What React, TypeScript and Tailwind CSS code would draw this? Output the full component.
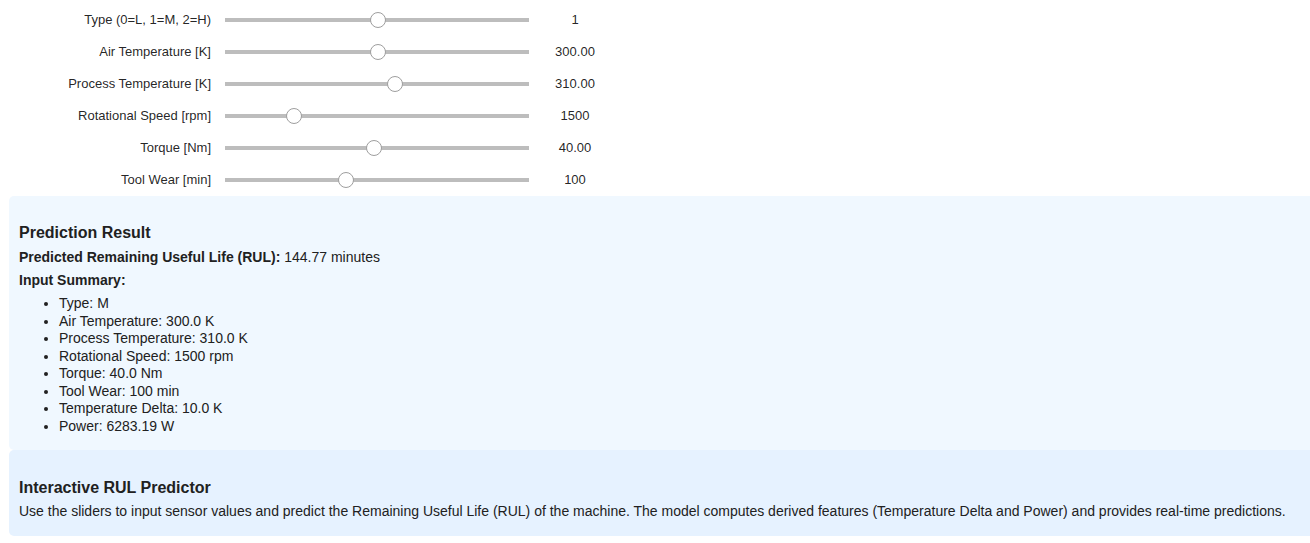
import { useState } from 'react';

type Slider = {
  id: string;
  label: string;
  min: number;
  max: number;
  step: number;
  initial: number;
  digits: number;
};

const sliders: Slider[] = [
  { id: 'type', label: 'Type (0=L, 1=M, 2=H)', min: 0, max: 2, step: 1, initial: 1, digits: 0 },
  { id: 'air', label: 'Air Temperature [K]', min: 295, max: 305, step: 0.1, initial: 300, digits: 2 },
  { id: 'process', label: 'Process Temperature [K]', min: 305, max: 314, step: 0.1, initial: 310, digits: 2 },
  { id: 'speed', label: 'Rotational Speed [rpm]', min: 1168, max: 2650, step: 1, initial: 1500, digits: 0 },
  { id: 'torque', label: 'Torque [Nm]', min: 3, max: 79, step: 0.1, initial: 40, digits: 2 },
  { id: 'wear', label: 'Tool Wear [min]', min: 0, max: 253, step: 1, initial: 100, digits: 0 },
];

export default function App() {
  const [values, setValues] = useState(sliders.map((s) => s.initial));
  const [type, air, process, speed, torque, wear] = values;
  const power = (torque * speed * 2 * Math.PI) / 60;

  const update = (index: number, value: number) =>
    setValues((current) => current.map((v, i) => (i === index ? value : v)));

  const summary = [
    `Type: ${['L', 'M', 'H'][type]}`,
    `Air Temperature: ${air.toFixed(1)} K`,
    `Process Temperature: ${process.toFixed(1)} K`,
    `Rotational Speed: ${speed} rpm`,
    `Torque: ${torque.toFixed(1)} Nm`,
    `Tool Wear: ${wear} min`,
    `Temperature Delta: ${(process - air).toFixed(1)} K`,
    `Power: ${power.toFixed(2)} W`,
  ];

  return (
    <main className="bg-white pt-1 pl-[9px] font-['Liberation_Sans',Arial,sans-serif] text-sm text-[#212121]">
      <form className="max-w-[606px] text-[13px] text-black/87">
        {sliders.map((s, i) => (
          <div key={s.id} className="flex h-8 items-center">
            <label htmlFor={s.id} className="w-[202px] shrink-0 text-right whitespace-nowrap">
              {s.label}
            </label>
            <input
              id={s.id}
              type="range"
              min={s.min}
              max={s.max}
              step={s.step}
              value={values[i]}
              onChange={(e) => update(i, Number(e.target.value))}
              className="ml-[7px] h-4 min-w-0 flex-1 cursor-pointer appearance-none bg-[linear-gradient(#bdbdbd,#bdbdbd)] bg-[length:calc(100%-16px)_4px] bg-[position:7px_center] bg-no-repeat [&::-webkit-slider-thumb]:size-4 [&::-webkit-slider-thumb]:appearance-none [&::-webkit-slider-thumb]:rounded-full [&::-webkit-slider-thumb]:border [&::-webkit-slider-thumb]:border-[#9e9e9e] [&::-webkit-slider-thumb]:bg-white"
            />
            <output htmlFor={s.id} className="mr-[3px] w-[74px] shrink-0 text-center">
              {values[i].toFixed(s.digits)}
            </output>
          </div>
        ))}
      </form>

      <section className="rounded-l-[5px] bg-[#f0f8ff] px-[10px] pt-7 pb-[15px]">
        <h3 className="text-base leading-[18px] font-bold">Prediction Result</h3>
        <p className="mt-[6px] leading-[18px]">
          <b>Predicted Remaining Useful Life (RUL):</b> 144.77 minutes
        </p>
        <p className="mt-[5px] leading-[18px]">
          <b>Input Summary:</b>
        </p>
        <ul className="mt-[6px] list-disc pl-10 leading-tight">
          {summary.map((line) => (
            <li key={line}>{line}</li>
          ))}
        </ul>
      </section>

      <section className="rounded-l-[5px] bg-[#e6f2ff] px-[10px] pt-[29px] pb-4">
        <h3 className="text-base leading-[18px] font-bold">Interactive RUL Predictor</h3>
        <p className="mt-[5px] leading-[18px]">
          Use the sliders to input sensor values and predict the Remaining Useful Life (RUL) of the machine. The
          model computes derived features (Temperature Delta and Power) and provides real-time predictions.
        </p>
      </section>
    </main>
  );
}
